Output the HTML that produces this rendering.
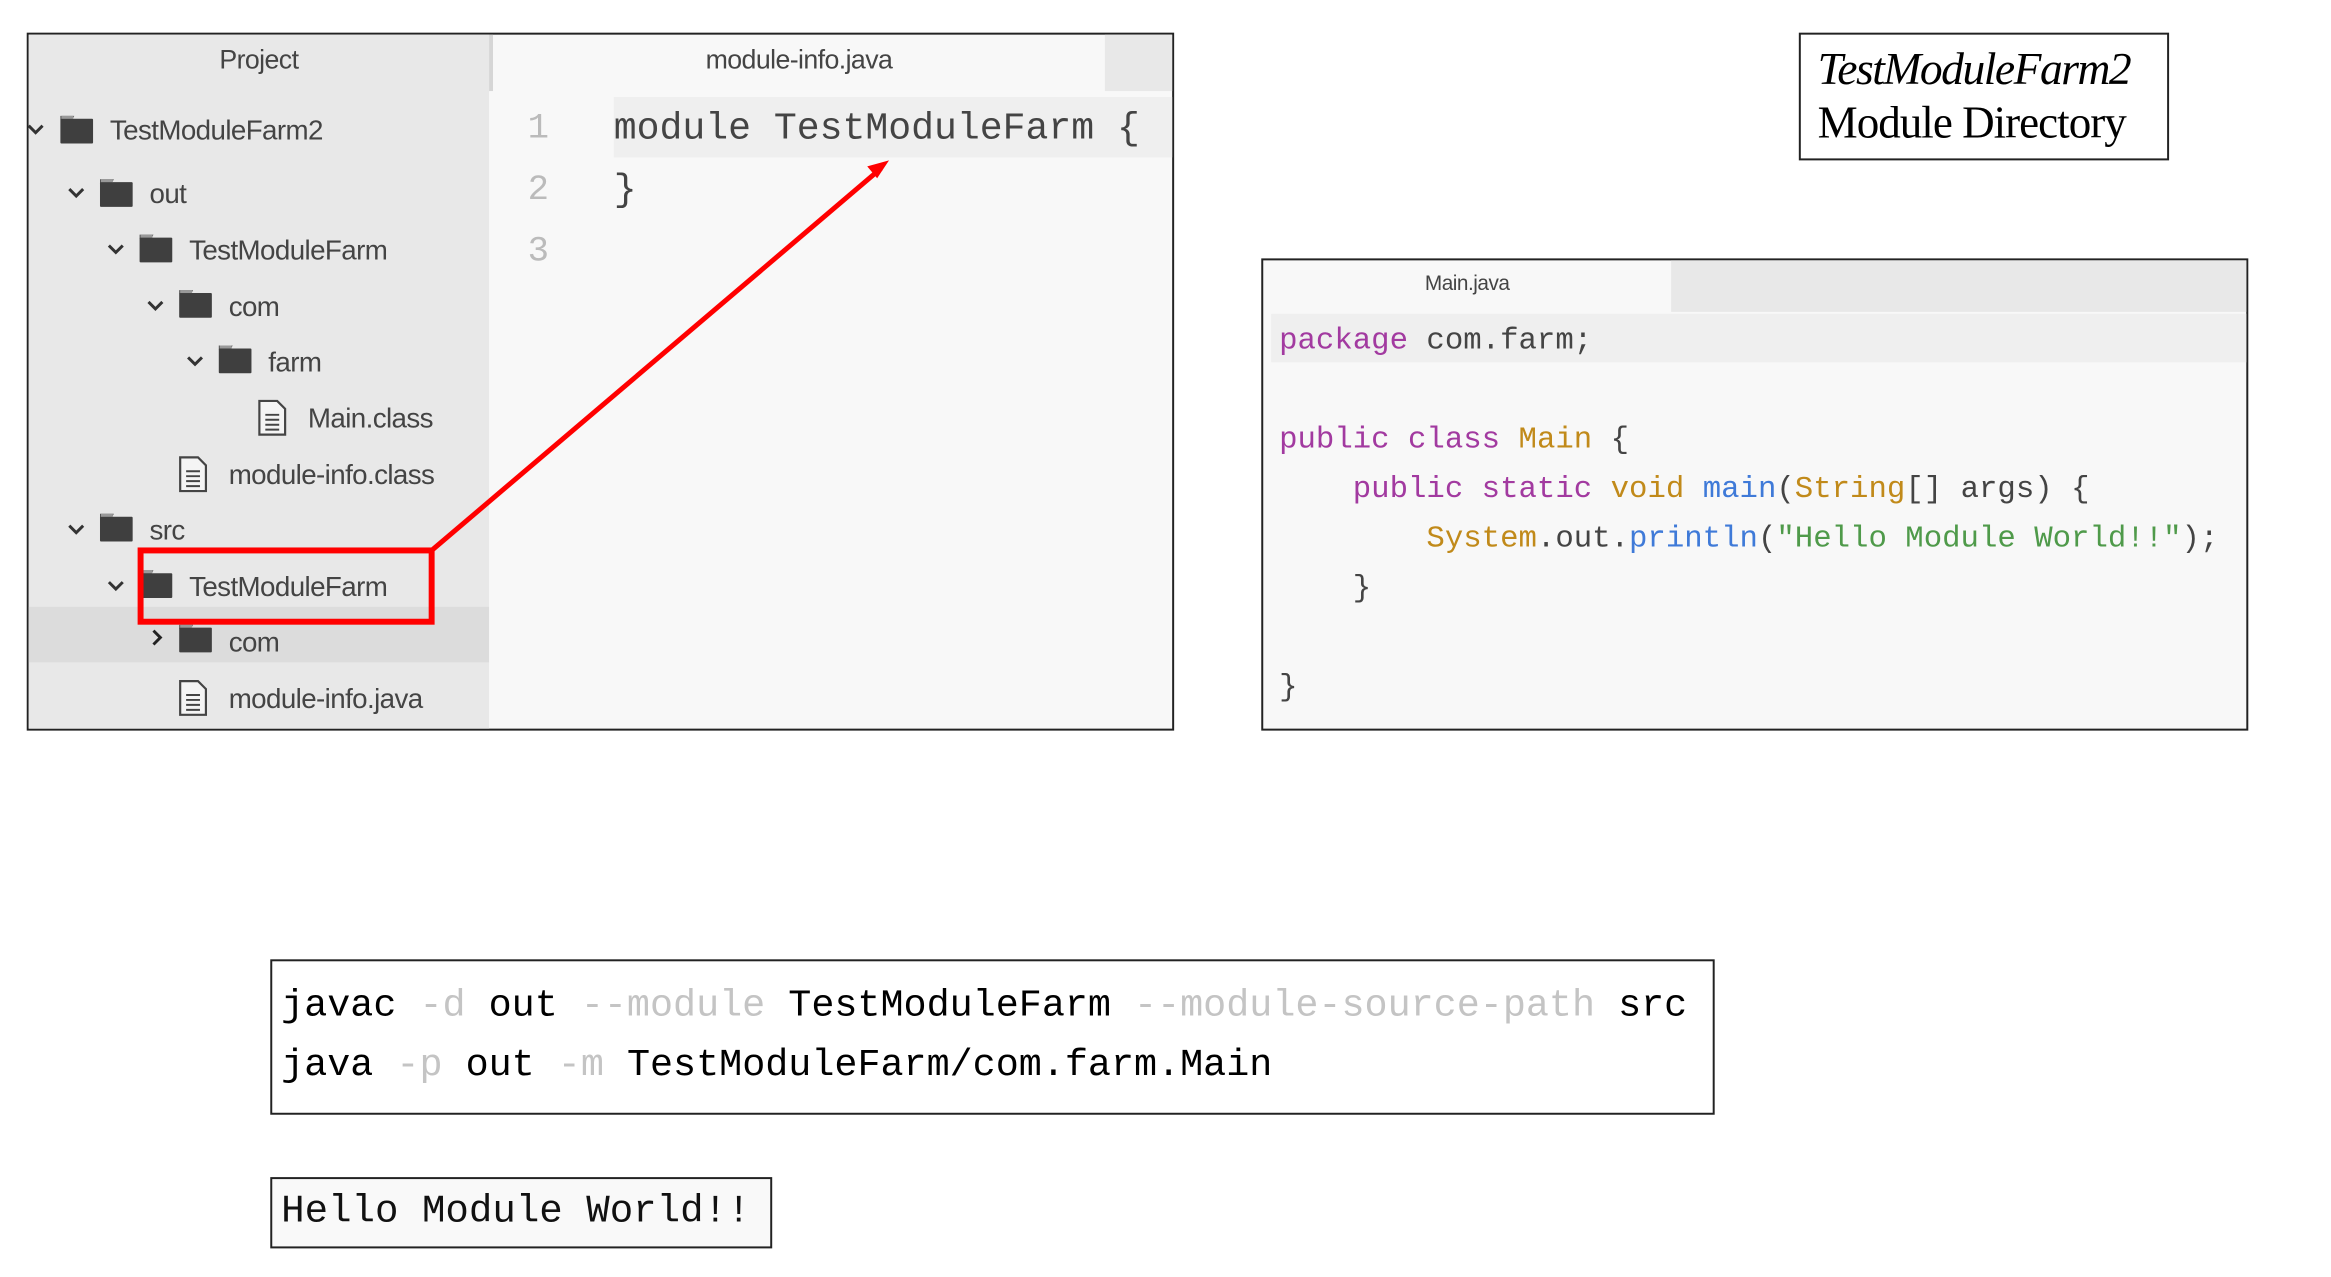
<!DOCTYPE html>
<html><head><meta charset="utf-8"><style>
*{margin:0;padding:0;box-sizing:border-box}
body{width:2331px;height:1276px;background:#fff;position:relative;overflow:hidden;font-family:"Liberation Sans",sans-serif}
#w{position:absolute;left:0;top:0;width:2360px;height:1290px;transform:scale(0.99);transform-origin:0 0}
.a{position:absolute}
.t{position:absolute;font-size:28px;color:#444;letter-spacing:-0.6px;line-height:40px;white-space:nowrap}
.mono{font-family:"Liberation Mono",monospace;white-space:pre}
</style></head><body><div id="w">
<!-- left panel -->
<div class="a" style="left:27px;top:33px;width:1159px;height:705px;border:2px solid #222;background:#f8f8f8"></div>
<div class="a" style="left:29px;top:35px;width:465px;height:701px;background:#e8e8e8"></div>
<div class="a" style="left:494px;top:35px;width:4px;height:57px;background:#d6d6d6"></div>
<div class="a" style="left:1116px;top:35px;width:68px;height:57px;background:#e8e8e8"></div>
<div class="t" style="left:29px;width:465px;text-align:center;top:40px;font-size:27px">Project</div>
<div class="t" style="left:498px;width:618px;text-align:center;top:40px;font-size:27px">module-info.java</div>
<div class="a" style="left:620px;top:98px;width:564px;height:61px;background:#efefef"></div>
<div class="a mono" style="left:533px;top:99px;font-size:36px;color:#bbb;line-height:62px">1
2
3</div>
<div class="a mono" style="left:620px;top:99px;font-size:38.5px;color:#444;line-height:62px">module TestModuleFarm {
}</div>
<div class="a" style="left:29px;top:613px;width:465px;height:56px;background:#dcdcdc"></div>

<svg class="a" style="left:0;top:0" width="1200" height="760">
<defs>
<g id="fo"><path d="M0 4h12l2-4h-14z" fill="#555"/><rect x="0" y="3" width="33" height="25" rx="1" fill="#3f3f3f"/><rect x="1" y="0" width="12" height="3" fill="#999"/></g>
<g id="fi"><path d="M1 1h18l8 8v26h-26z" fill="#f4f4f4" stroke="#444" stroke-width="2.2"/><path d="M7 15h14M7 20h14M7 25h14M7 30h14" stroke="#444" stroke-width="2"/></g>
<path id="cv" d="M0 0l7 7l7-7" fill="none" stroke="#333" stroke-width="3"/>
</defs>
<g>
<use href="#cv" x="29" y="127"/><use href="#fo" x="61" y="117"/>
<use href="#cv" x="70" y="191"/><use href="#fo" x="101" y="181"/>
<use href="#cv" x="110" y="248"/><use href="#fo" x="141" y="237"/>
<use href="#cv" x="150" y="305"/><use href="#fo" x="181" y="293"/>
<use href="#cv" x="190" y="361"/><use href="#fo" x="221" y="349"/>
<use href="#fi" x="261" y="404"/>
<use href="#fi" x="181" y="461"/>
<use href="#cv" x="70" y="531"/><use href="#fo" x="101" y="519"/>
<use href="#cv" x="110" y="588"/><use href="#fo" x="141" y="576"/>
<path d="M155 637l7 7l-7 7" fill="none" stroke="#222" stroke-width="3"/><use href="#fo" x="181" y="631"/>
<use href="#fi" x="181" y="687"/>
</g>
<rect x="142" y="556" width="294" height="72" fill="none" stroke="#f00" stroke-width="6"/>
<line x1="436" y1="556" x2="890" y2="170" stroke="#f00" stroke-width="5"/>
<path d="M898 162l-22 6l10 12z" fill="#f00"/>
</svg>
<div class="t" style="left:111px;top:112px">TestModuleFarm2</div>
<div class="t" style="left:151px;top:176px">out</div>
<div class="t" style="left:191px;top:233px">TestModuleFarm</div>
<div class="t" style="left:231px;top:290px">com</div>
<div class="t" style="left:271px;top:346px">farm</div>
<div class="t" style="left:311px;top:403px">Main.class</div>
<div class="t" style="left:231px;top:460px">module-info.class</div>
<div class="t" style="left:151px;top:516px">src</div>
<div class="t" style="left:191px;top:573px">TestModuleFarm</div>
<div class="t" style="left:231px;top:629px">com</div>
<div class="t" style="left:231px;top:686px">module-info.java</div>

<!-- title box -->
<div class="a" style="left:1817px;top:33px;width:374px;height:129px;border:2px solid #222;background:#fff"></div>
<div class="a" style="left:1836px;top:44px;font-family:'Liberation Serif',serif;font-style:italic;font-size:46px;letter-spacing:-1.5px;line-height:52px;color:#000">TestModuleFarm2</div>
<div class="a" style="left:1836px;top:98px;font-family:'Liberation Serif',serif;font-size:45.5px;letter-spacing:-1px;line-height:52px;color:#000">Module Directory</div>

<!-- Main.java -->
<div class="a" style="left:1274px;top:261px;width:997px;height:477px;border:2px solid #222;background:#f8f8f8"></div>
<div class="a" style="left:1688px;top:263px;width:581px;height:52px;background:#e8e8e8"></div>
<div class="t" style="left:1276px;width:412px;text-align:center;top:267px;font-size:21px;letter-spacing:-0.5px">Main.java</div>
<div class="a" style="left:1284px;top:317px;width:985px;height:49px;background:#efefef"></div>
<div class="a mono" style="left:1292px;top:320px;font-size:31px;line-height:50px;color:#444"><span style="color:#a23aa0">package</span> com.farm;

<span style="color:#a23aa0">public class</span> <span style="color:#c18a1a">Main</span> {
    <span style="color:#a23aa0">public static</span> <span style="color:#c18a1a">void</span> <span style="color:#3f7ad8">main</span>(<span style="color:#c18a1a">String</span>[] args) {
        <span style="color:#c18a1a">System</span>.out.<span style="color:#3f7ad8">println</span>(<span style="color:#4f9a4a">"Hello Module World!!"</span>);
    }

}</div>

<!-- commands -->
<div class="a" style="left:273px;top:969px;width:1459px;height:157px;border:2px solid #222;background:#fff"></div>
<div class="a mono" style="left:284px;top:986px;font-size:38.8px;line-height:60px;color:#000">javac <span style="color:#c4c4c4">-d</span> out <span style="color:#c4c4c4">--module</span> TestModuleFarm <span style="color:#c4c4c4">--module-source-path</span> src
java <span style="color:#c4c4c4">-p</span> out <span style="color:#c4c4c4">-m</span> TestModuleFarm/com.farm.Main</div>

<div class="a" style="left:273px;top:1189px;width:507px;height:72px;border:2px solid #222;background:#f9f9f9"></div>
<div class="a mono" style="left:284px;top:1196px;font-size:39.5px;line-height:56px;color:#111">Hello Module World!!</div>
</div></body></html>
